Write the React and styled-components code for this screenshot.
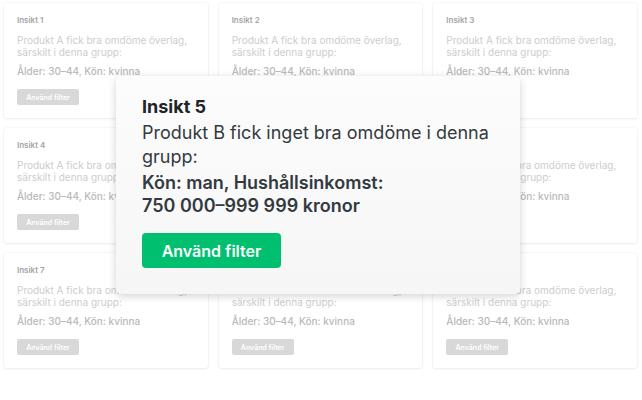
import React from "react";
import styled, { createGlobalStyle } from "styled-components";

const GlobalStyle = createGlobalStyle`
    html, body {
        margin: 0;
        padding: 0;
        background: #ffffff;
        font-family: Inter, "Liberation Sans", sans-serif;
    }
`;

const Page = styled.div`
    position: relative;
    width: 642px;
    height: 400px;
    overflow: hidden;
    background: #ffffff;
`;

const Grid = styled.div`
    display: grid;
    grid-template-columns: repeat(3, 1fr);
    column-gap: 11px;
    row-gap: 10px;
    padding: 3px 5px 0 4px;
`;

const Card = styled.div`
    height: 115px;
    box-sizing: border-box;
    padding: 11px 13px 0 13px;
    background: #ffffff;
    border-radius: 3px;
    box-shadow: 0 0 0 1px rgba(0, 0, 0, 0.025), 0 1px 3px rgba(0, 0, 0, 0.06);
`;

const CardTitle = styled.div`
    font-size: 8px;
    font-weight: 600;
    line-height: 12px;
    color: #a4a4a4;
`;

const CardText = styled.p`
    margin: 8px 0 0 0;
    font-size: 10px;
    line-height: 12px;
    color: #cdcdcd;
`;

const CardFilter = styled.p`
    margin: 7px 0 0 0;
    font-size: 10px;
    line-height: 12px;
    font-weight: 500;
    color: #b9b9b9;
`;

const SmallButton = styled.div`
    display: inline-flex;
    align-items: center;
    justify-content: center;
    margin-top: 12px;
    width: 62px;
    height: 16px;
    border-radius: 2px;
    background: #d8d8d8;
    color: #ffffff;
    font-size: 7px;
    font-weight: 600;
`;

const Popup = styled.div`
    position: absolute;
    left: 116px;
    top: 76px;
    width: 404px;
    height: 218px;
    box-sizing: border-box;
    padding: 19px 26px 0 26px;
    border-radius: 6px;
    background: linear-gradient(#fcfcfc, #f6f6f6);
    box-shadow: 0 2px 8px rgba(0, 0, 0, 0.18);
    color: #333a3f;
`;

const PopupTitle = styled.h2`
    margin: 0;
    font-size: 18px;
    line-height: 24px;
    font-weight: 700;
    color: #1f2428;
`;

const PopupText = styled.p`
    margin: 2px 0 0 0;
    font-size: 18px;
    line-height: 24px;
    font-weight: 400;
`;

const PopupFilter = styled.p`
    margin: 2px 0 0 0;
    font-size: 18px;
    line-height: 23px;
    font-weight: 600;
`;

const NoWrap = styled.span`
    white-space: nowrap;
`;

const GreenButton = styled.button`
    display: flex;
    align-items: center;
    justify-content: center;
    margin-top: 16px;
    width: 139px;
    height: 35px;
    border: none;
    border-radius: 4px;
    background: #00bf6f;
    color: #ffffff;
    font-family: inherit;
    font-size: 16px;
    font-weight: 600;
`;

const insights = [1, 2, 3, 4, 5, 6, 7, 8, 9];

const App = () => {
    return (
        <Page>
            <GlobalStyle />
            <Grid>
                {insights.map((n) => (
                    <Card key={n}>
                        <CardTitle>Insikt {n}</CardTitle>
                        <CardText>
                            Produkt A fick bra omdöme överlag, särskilt i denna grupp:
                        </CardText>
                        <CardFilter>Ålder: 30–44, Kön: kvinna</CardFilter>
                        <SmallButton>Använd filter</SmallButton>
                    </Card>
                ))}
            </Grid>

            {/* focused insight */}
            <Popup>
                <PopupTitle>Insikt 5</PopupTitle>
                <PopupText>Produkt B fick inget bra omdöme i denna grupp:</PopupText>
                <PopupFilter>
                    Kön: man, Hushållsinkomst: <NoWrap>750 000–999 999 kronor</NoWrap>
                </PopupFilter>
                <GreenButton>Använd filter</GreenButton>
            </Popup>
        </Page>
    );
};

export default App;
